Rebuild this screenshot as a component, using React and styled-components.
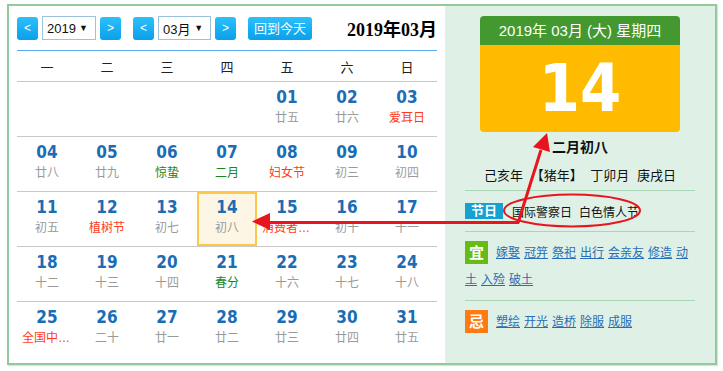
import styled, { createGlobalStyle } from 'styled-components'

const GlobalStyle = createGlobalStyle`
  body {
    margin: 0;
    background: #fff;
    font-family: "Liberation Sans", "Noto Sans CJK SC", sans-serif;
    color: #222;
  }
`;

const Page = styled.div`
  position: relative;
  width: 723px;
  height: 371px;
  padding: 4px 0 0 7px;
  box-sizing: border-box;
`;

const Frame = styled.div`
  display: flex;
  width: 710px;
  height: 361px;
  box-sizing: border-box;
  border: 2px solid #93c99d;
  box-shadow: 1px 1px 1px rgba(0, 0, 0, 0.12);
`;

const CalendarPanel = styled.div`
  width: 436px;
  padding: 0 8px;
  box-sizing: border-box;
  background: #fff;
`;

const Toolbar = styled.div`
  display: flex;
  align-items: center;
  height: 44px;
  border-bottom: 1px solid #5aacf2;
`;

const NavButton = styled.div`
  height: 23px;
  padding: 0 ${p => p.$pad || 7}px;
  min-width: 20px;
  box-sizing: border-box;
  margin-left: ${p => p.$ml || 0}px;
  border-radius: 3px;
  background: linear-gradient(#2cc0fb, #0aa0ea);
  color: #fff;
  font-size: ${p => p.$fs || 12}px;
  line-height: 23px;
  text-align: center;
`;

const Select = styled.div`
  display: flex;
  align-items: center;
  justify-content: space-between;
  width: ${p => p.$w}px;
  height: 24px;
  margin: 0 4px;
  padding: 0 7px 0 4px;
  box-sizing: border-box;
  border: 1px solid #9cc3de;
  background: #fff;
  font-size: 13px;
  color: #111;
`;

const Caret = styled.span`
  font-size: 9px;
  color: #111;
`;

const Title = styled.div`
  margin-left: auto;
  font-family: "Liberation Serif", "Noto Sans CJK SC", serif;
  font-weight: 700;
  font-size: 18px;
  color: #000;
`;

const WeekHead = styled.div`
  display: grid;
  grid-template-columns: repeat(7, 60px);
  height: 30px;
  border-bottom: 1px solid #c8c8c8;
  font-size: 13px;
  line-height: 33px;
  text-align: center;
  color: #222;
`;

const Week = styled.div`
  display: grid;
  grid-template-columns: repeat(7, 60px);
  border-bottom: 1px solid #c8c8c8;

  &:last-child {
    border-bottom: none;
  }
`;

const Cell = styled.div`
  display: flex;
  flex-direction: column;
  align-items: center;
  height: 54px;
  box-sizing: border-box;
  padding-top: ${p => (p.$selected ? 3 : 5)}px;
  border: ${p => (p.$selected ? '2px solid #fcc84a' : 'none')};
  background: ${p => (p.$selected ? '#fdf6e4' : 'transparent')};
`;

const DayNum = styled.div`
  font-family: "DejaVu Sans", "Liberation Sans", sans-serif;
  font-stretch: condensed;
  font-weight: 700;
  font-size: 17px;
  line-height: 20px;
  color: #1a6db4;
`;

const labelColors = { normal: '#9a9a9a', fest: '#ff3b1a', term: '#14891a' };

const Lunar = styled.div`
  margin-top: 3px;
  max-width: 50px;
  font-size: 12px;
  line-height: 16px;
  white-space: nowrap;
  overflow: hidden;
  text-overflow: ellipsis;
  color: ${p => labelColors[p.$kind]};
`;

const InfoPanel = styled.div`
  flex: 1;
  display: flex;
  flex-direction: column;
  align-items: center;
  padding: 10px 20px 0;
  background: #dff1e6;
`;

const DayCard = styled.div`
  width: 200px;
  border-radius: 4px;
  overflow: hidden;
`;

const CardHead = styled.div`
  height: 29px;
  background: #43982f;
  color: #fff;
  font-size: 15px;
  line-height: 29px;
  text-align: center;
`;

const CardBody = styled.div`
  height: 87px;
  background: #ffbb00;
  color: #fff;
  font-family: "DejaVu Sans", "Liberation Sans", sans-serif;
  font-stretch: condensed;
  font-weight: 700;
  font-size: 66px;
  line-height: 87px;
  text-align: center;
`;

const LunarDate = styled.div`
  margin-top: 5px;
  font-weight: 700;
  font-size: 14px;
  line-height: 20px;
  color: #111;
`;

const GanZhi = styled.div`
  margin-top: 9px;
  font-size: 13px;
  line-height: 20px;
  word-spacing: 4px;
  color: #111;
`;

const Section = styled.div`
  align-self: stretch;
  border-top: 1px solid #a9d6b4;
  ${p => p.$row
    ? 'display: flex; align-items: center; height: 40px;'
    : 'padding: 7px 0; line-height: 25px;'}
  margin-top: ${p => p.$mt || 0}px;
`;

const Badge = styled.span`
  display: inline-block;
  vertical-align: middle;
  height: ${p => p.$h}px;
  padding: 0 ${p => p.$px}px;
  margin-right: ${p => p.$mr}px;
  background: ${p => p.$bg};
  color: #fff;
  font-weight: 700;
  font-size: ${p => p.$fs}px;
  line-height: ${p => p.$h}px;
`;

const Festival = styled.span`
  margin-right: 7px;
  font-size: 12px;
  color: #111;
`;

const Tag = styled.a`
  margin-right: 4px;
  font-size: 12px;
  color: #2a6db5;
  text-decoration: underline;
`;

const Overlay = styled.svg`
  position: absolute;
  top: 0;
  left: 0;
  pointer-events: none;
`;

const weekdays = ['一', '二', '三', '四', '五', '六', '日'];

const lunar = {
  1: ['廿五'], 2: ['廿六'], 3: ['爱耳日', 'fest'], 4: ['廿八'], 5: ['廿九'],
  6: ['惊蛰', 'term'], 7: ['二月', 'term'], 8: ['妇女节', 'fest'], 9: ['初三'],
  10: ['初四'], 11: ['初五'], 12: ['植树节', 'fest'], 13: ['初七'], 14: ['初八'],
  15: ['消费者权益日', 'fest'], 16: ['初十'], 17: ['十一'], 18: ['十二'], 19: ['十三'],
  20: ['十四'], 21: ['春分', 'term'], 22: ['十六'], 23: ['十七'], 24: ['十八'],
  25: ['全国中小学生安全教育日', 'fest'], 26: ['二十'], 27: ['廿一'], 28: ['廿二'],
  29: ['廿三'], 30: ['廿四'], 31: ['廿五'],
};

const buildWeeks = () => {
  const cells = [null, null, null, null];
  for (let d = 1; d <= 31; d++) cells.push(d);
  const weeks = [];
  for (let i = 0; i < cells.length; i += 7) weeks.push(cells.slice(i, i + 7));
  return weeks;
};

const good = ['嫁娶', '冠笄', '祭祀', '出行', '会亲友', '修造', '动土', '入殓', '破土'];
const bad = ['塑绘', '开光', '造桥', '除服', '成服'];

const App = () => {
  const weeks = buildWeeks();
  const pad = n => String(n).padStart(2, '0');

  return (
    <Page>
      <GlobalStyle />
      <Frame>
        <CalendarPanel>
          <Toolbar>
            <NavButton>&lt;</NavButton>
            <Select $w={54}>2019<Caret>▼</Caret></Select>
            <NavButton>&gt;</NavButton>
            <NavButton $ml={12}>&lt;</NavButton>
            <Select $w={53}>03月<Caret>▼</Caret></Select>
            <NavButton>&gt;</NavButton>
            <NavButton $ml={12} $pad={6} $fs={13}>回到今天</NavButton>
            <Title>2019年03月</Title>
          </Toolbar>
          <WeekHead>
            {weekdays.map(w => <div key={w}>{w}</div>)}
          </WeekHead>
          {weeks.map((week, i) => (
            <Week key={i}>
              {week.map((d, j) => (
                d ? (
                  <Cell key={j} $selected={d === 14}>
                    <DayNum>{pad(d)}</DayNum>
                    <Lunar $kind={lunar[d][1] || 'normal'}>{lunar[d][0]}</Lunar>
                  </Cell>
                ) : <Cell key={j} />
              ))}
            </Week>
          ))}
        </CalendarPanel>

        <InfoPanel>
          <DayCard>
            <CardHead>2019年 03月 (大) 星期四</CardHead>
            <CardBody>14</CardBody>
          </DayCard>
          <LunarDate>二月初八</LunarDate>
          <GanZhi>己亥年 【猪年】 丁卯月 庚戌日</GanZhi>
          <Section $row $mt={4}>
            <Badge $bg="#17a0d2" $h={16} $px={6} $mr={9} $fs={13}>节日</Badge>
            <Festival>国际警察日</Festival>
            <Festival>白色情人节</Festival>
          </Section>
          <Section>
            <Badge $bg="#66bb14" $h={23} $px={4} $mr={8} $fs={15}>宜</Badge>
            {good.map(t => <Tag key={t}>{t}</Tag>)}
          </Section>
          <Section>
            <Badge $bg="#ff7a10" $h={23} $px={4} $mr={8} $fs={15}>忌</Badge>
            {bad.map(t => <Tag key={t}>{t}</Tag>)}
          </Section>
        </InfoPanel>
      </Frame>

      <Overlay width="723" height="371" viewBox="0 0 723 371">
        <ellipse cx="572" cy="210.5" rx="68" ry="16" fill="none" stroke="#e8141e" strokeWidth="2" />
        <line x1="519" y1="222.5" x2="266" y2="222.5" stroke="#e8141e" strokeWidth="3" />
        <polygon points="252,221.5 270,213 270,230" fill="#e8141e" />
        <line x1="518" y1="223" x2="541" y2="150" stroke="#e8141e" strokeWidth="3" />
        <polygon points="547,133 550,152 533,147" fill="#e8141e" />
      </Overlay>
    </Page>
  );
};

export default App;
